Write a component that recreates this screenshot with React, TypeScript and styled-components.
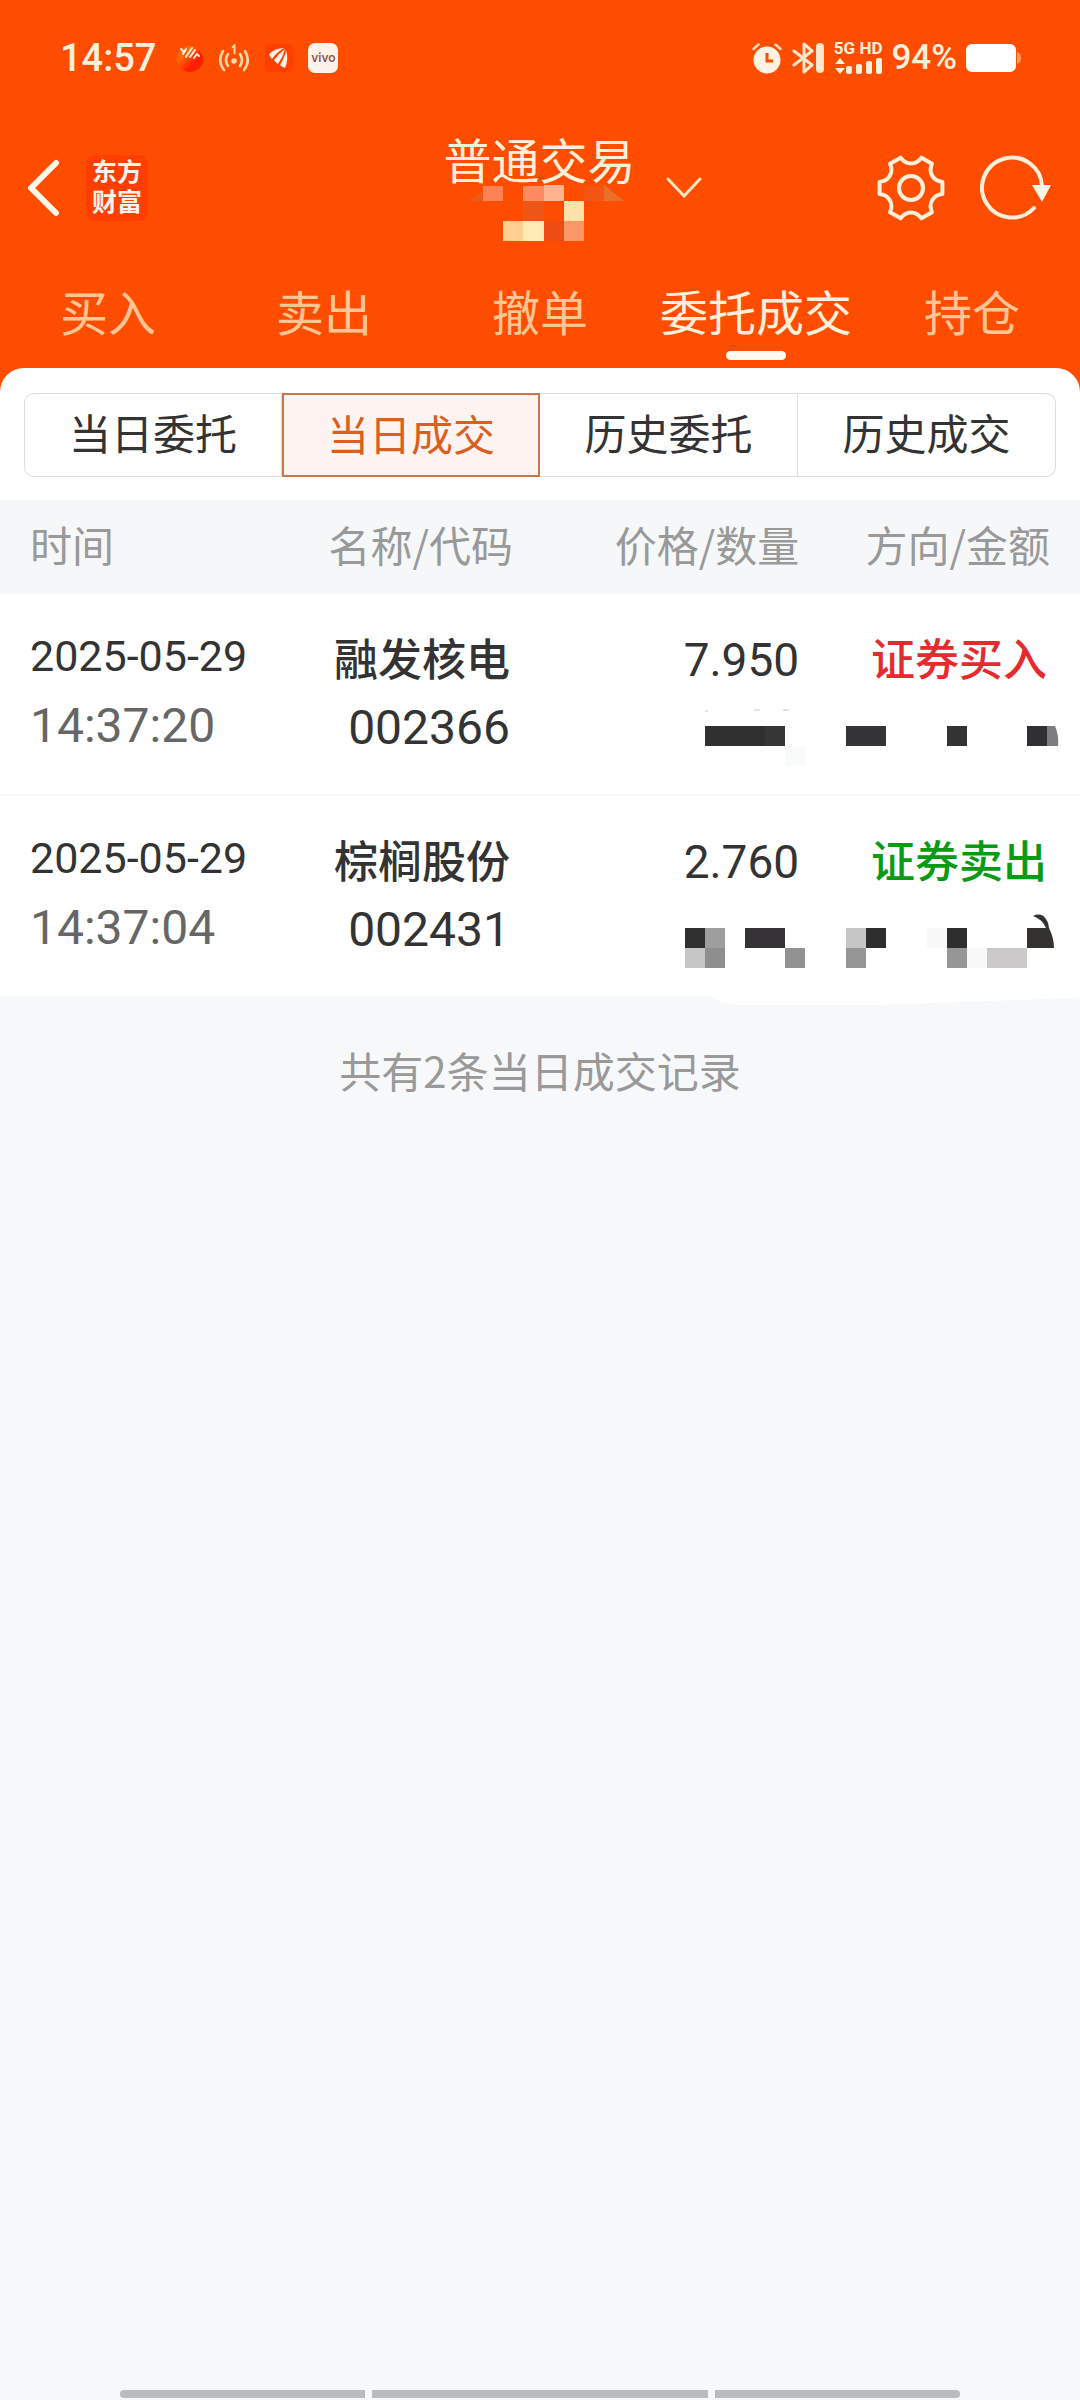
import React, { useState } from "react";
import styled, { createGlobalStyle } from "styled-components";

const CJK = '"Noto Sans CJK SC", sans-serif';
const DIGITS = 'Roboto, "Noto Sans CJK SC", sans-serif';
const CREAM = "#fff0dc";

const GlobalStyle = createGlobalStyle`
  *, *::before, *::after { box-sizing: border-box; }
  body { margin: 0; background: #f7f8fa; font-family: ${CJK}; }
  button { border: 0; padding: 0; margin: 0; background: none; color: inherit; font: inherit; cursor: pointer; }
  svg { display: block; flex: none; }
`;

const Page = styled.div`
  display: flex;
  flex-direction: column;
  min-height: 100vh;
  background: #f7f8fa;
`;

const Header = styled.header`
  background: #ff4d00;
  color: ${CREAM};
  padding-bottom: 24px;
  margin-bottom: -24px;
`;

const StatusBar = styled.div`
  display: flex;
  align-items: center;
  justify-content: space-between;
  height: 116px;
  padding: 0 59px 0 60px;
`;

const StatusGroup = styled.div<{ $gap: number }>`
  display: flex;
  align-items: center;
  gap: ${(p) => p.$gap}px;
`;

const Clock = styled.span`
  padding-right: 4px;
  font: 500 38px/48px ${DIGITS};
`;

const VivoBadge = styled.span`
  display: grid;
  place-items: center;
  width: 30px;
  height: 30px;
  border-radius: 7px;
  background: #fff2ea;
  color: #8a5a4a;
  font: 600 12px/12px Inter, sans-serif;
`;

const Network = styled.span`
  display: grid;
  gap: 3px;
  font: 700 17px/14px ${DIGITS};
  white-space: nowrap;
`;

const Percent = styled.span`
  font: 500 35px/40px ${DIGITS};
`;

const TitleBar = styled.div`
  display: grid;
  grid-template-columns: 1fr auto 1fr;
  align-items: center;
  height: 144px;
  padding: 0 28px 0 26px;
`;

const Tools = styled.div<{ $end?: boolean }>`
  display: flex;
  align-items: center;
  gap: ${(p) => (p.$end ? 34 : 26)}px;
  justify-content: ${(p) => (p.$end ? "flex-end" : "flex-start")};
`;

const BrandMark = styled.span`
  display: grid;
  place-content: center;
  width: 62px;
  height: 66px;
  border-radius: 8px;
  background: #ff3f00;
  color: #fff4ec;
  font: 700 25px/30px ${DIGITS};
  text-align: center;
`;

const AccountButton = styled.button`
  display: flex;
  align-items: center;
  gap: 30px;
  padding-left: 67px;
`;

const AccountName = styled.span`
  display: grid;
  justify-items: center;
  font-size: 48px;
  line-height: 46px;
`;

const Tabs = styled.nav`
  display: grid;
  grid-template-columns: repeat(5, 1fr);
  height: 108px;
`;

const Tab = styled.button<{ $active: boolean }>`
  position: relative;
  padding-bottom: 8px;
  font-size: 48px;
  line-height: 96px;
  white-space: nowrap;
  color: ${(p) => (p.$active ? CREAM : "#ffc594")};
  &::after {
    content: "";
    display: ${(p) => (p.$active ? "block" : "none")};
    position: absolute;
    left: 50%;
    bottom: 8px;
    width: 60px;
    height: 9px;
    margin-left: -30px;
    border-radius: 5px;
    background: #fffaf0;
  }
`;

const Panel = styled.main`
  border-radius: 24px 24px 0 0;
  background: #fff;
`;

const Segments = styled.div`
  display: grid;
  grid-template-columns: repeat(4, 1fr);
  padding: 25px 24px 23px;
`;

const Segment = styled.button<{ $active: boolean }>`
  height: 84px;
  border: 1px solid #dcdee0;
  border-left-width: 0;
  color: #333;
  font-size: 42px;
  line-height: 76px;
  padding-bottom: 6px;
  &:first-child { border-left-width: 1px; border-radius: 10px 0 0 10px; }
  &:last-child { border-radius: 0 10px 10px 0; }
  ${(p) =>
    p.$active &&
    `
    border: 2px solid #c8764a;
    background: #fff4f2;
    color: #d9601f;
  `}
`;

const Records = styled.table`
  width: 100%;
  table-layout: fixed;
  border-collapse: separate;
  border-spacing: 0;
`;

const Column = styled.col<{ $share: string }>`
  width: ${(p) => p.$share};
`;

const HeadCell = styled.th<{ $first?: boolean; $last?: boolean }>`
  height: 94px;
  padding: 0 ${(p) => (p.$last ? 30 : 0)}px 6px ${(p) => (p.$first ? 30 : 0)}px;
  background: #f5f7f8;
  color: #999;
  font-size: 42px;
  font-weight: 400;
  line-height: 60px;
  text-align: ${(p) => (p.$first ? "left" : "right")};
  white-space: nowrap;
`;

const Cell = styled.td<{ $first?: boolean; $last?: boolean }>`
  height: 202px;
  padding: 30px ${(p) => (p.$last ? 30 : 0)}px 0 ${(p) => (p.$first ? 30 : 0)}px;
  border-bottom: 2px solid #f7f7f7;
  color: #333;
  vertical-align: top;
  text-align: ${(p) => (p.$first ? "left" : "right")};
  white-space: nowrap;
`;

const DateLine = styled.div`
  font: 400 43px/64px ${DIGITS};
`;

const TimeLine = styled.div`
  color: #666;
  font: 400 48px/76px ${DIGITS};
`;

const NameLine = styled.div<{ $color?: string }>`
  padding-right: 3px;
  color: ${(p) => p.$color ?? "#333"};
  font: 500 44px/66px ${CJK};
`;

const CodeLine = styled.div`
  padding-right: 3px;
  font: 400 48px/76px ${DIGITS};
`;

const PriceLine = styled.div`
  font: 400 46px/72px ${DIGITS};
`;

const MaskLine = styled.div`
  display: flex;
  justify-content: flex-end;
  svg { overflow: visible; }
`;

const Summary = styled.p`
  margin: 42px 0 0;
  color: #999;
  font-size: 42px;
  line-height: 60px;
  text-align: center;
`;

const SystemNav = styled.div`
  display: grid;
  grid-template-columns: 8fr 11fr 8fr;
  gap: 7px;
  margin-top: auto;
  padding: 0 120px 2px;
`;

const NavBar = styled.span`
  height: 8px;
  background: #b9bbbd;
  &:first-child { border-radius: 4px 0 0 4px; }
  &:last-child { border-radius: 0 4px 4px 0; }
`;

const polar = (deg: number, r: number) => {
  const a = (deg * Math.PI) / 180;
  return `${(35 + r * Math.cos(a)).toFixed(1)} ${(35 + r * Math.sin(a)).toFixed(1)}`;
};

const gearPath =
  [0, 60, 120, 180, 240, 300]
    .map(
      (a, i) =>
        `${i === 0 ? "M" : "L"}${polar(a - 11, 32)} L${polar(a + 11, 32)} C${polar(a + 18, 23)} ${polar(a + 42, 23)} ${polar(a + 49, 32)}`
    )
    .join(" ") + " Z";

type Block = [x: number, y: number, w: number, h: number, fill: string];

const Blocks = ({ items }: { items: Block[] }) => (
  <>
    {items.map(([x, y, w, h, fill]) => (
      <rect key={`${x}-${y}`} x={x} y={y} width={w} height={h} fill={fill} />
    ))}
  </>
);

const accountMask: Block[] = [
  [40, 5, 20, 15, "#ff8257"],
  [80, 5, 21, 15, "#ff8c60"],
  [101, 4, 20, 16, "#ffb48e"],
  [141, 5, 20, 15, "#f45414"],
  [80, 20, 21, 20, "#ee5618"],
  [121, 20, 20, 20, "#ffe2aa"],
  [60, 40, 20, 20, "#ffd090"],
  [80, 40, 21, 20, "#ffebb6"],
  [101, 40, 20, 20, "#ef4c14"],
  [121, 40, 20, 20, "#fb9866"],
];

const quantityMasks: Block[][] = [
  [
    [26, 0, 60, 20, "#303030"],
    [86, 0, 20, 20, "#363636"],
    [106, 20, 20, 20, "#f8fbfa"],
  ],
  [
    [6, 0, 20, 20, "#303030"],
    [26, 0, 20, 20, "#9e9e9e"],
    [66, 0, 40, 20, "#353335"],
    [6, 20, 20, 20, "#c6c6c6"],
    [26, 20, 20, 20, "#8e8e8e"],
    [106, 20, 20, 20, "#929292"],
  ],
];

const amountMasks: Block[][] = [
  [
    [46, 0, 40, 20, "#353538"],
    [147, 0, 20, 20, "#333"],
    [227, 0, 20, 20, "#303032"],
  ],
  [
    [46, 0, 20, 20, "#c6c6c6"],
    [66, 0, 20, 20, "#2e2e2e"],
    [127, 0, 20, 20, "#f8f8f8"],
    [147, 0, 20, 20, "#2e2e2e"],
    [46, 20, 20, 20, "#969696"],
    [147, 20, 20, 20, "#969696"],
    [167, 20, 20, 20, "#f8f8f8"],
    [187, 20, 40, 20, "#cbc9ca"],
  ],
];

const records = [
  { date: "2025-05-29", time: "14:37:20", name: "融发核电", code: "002366", price: "7.950", side: "证券买入", color: "#e62a2e" },
  { date: "2025-05-29", time: "14:37:04", name: "棕榈股份", code: "002431", price: "2.760", side: "证券卖出", color: "#0a9a14" },
];

const tabs = ["买入", "卖出", "撤单", "委托成交", "持仓"];
const segments = ["当日委托", "当日成交", "历史委托", "历史成交"];

export default function App() {
  const [tab, setTab] = useState(3);
  const [segment, setSegment] = useState(1);

  return (
    <Page>
      <GlobalStyle />
      <Header>
        <StatusBar>
          <StatusGroup $gap={14}>
            <Clock>14:57</Clock>
            <svg width="30" height="30" viewBox="0 0 30 30">
              <defs>
                <linearGradient id="ball" x1="0" y1="0" x2="1" y2="1">
                  <stop offset="0.3" stopColor="#ff6a00" />
                  <stop offset="0.65" stopColor="#ff1e00" />
                </linearGradient>
              </defs>
              <circle cx="16" cy="16" r="13" fill="url(#ball)" />
              <path d="M7 6l2 2M9 11l3-5M12 14l6-9M16 14l5-7M20 15l3-4M24 12l1 1" stroke="#fff0e0" strokeWidth="2" strokeLinecap="round" />
            </svg>
            <svg width="32" height="30" viewBox="0 0 32 30" fill="none" stroke="#ffd9a8" strokeWidth="2.6" strokeLinecap="round">
              <path d="M5 8q-6 10 1 19M27 8q6 10-1 19M10 11q-4 6 0 12M22 11q4 6 0 12" />
              <path d="M14.500 4l2-1.500v8" strokeWidth="2" />
              <circle cx="16" cy="18" r="1.500" fill="#ffd9a8" />
            </svg>
            <svg width="30" height="30" viewBox="0 0 30 30">
              <rect x="1" y="1" width="28" height="28" rx="5" fill="#ff3f00" />
              <path d="M5 11Q11 5 20 5Q13 9 8 16Q6 14 5 11ZM10 17Q15 10 21 6Q19 14 14 21Q12 20 10 17ZM16 22Q21 14 22 7Q25 16 21 25Q18 24 16 22Z" fill="#fff0e4" />
            </svg>
            <VivoBadge>vivo</VivoBadge>
          </StatusGroup>
          <StatusGroup $gap={9}>
            <svg width="30" height="32" viewBox="0 0 30 32">
              <circle cx="15" cy="18" r="13.500" fill="#fff3e4" />
              <path d="M1.500 7l5-4.500M28.500 7l-5-4.500" stroke="#ffdcb4" strokeWidth="2.500" strokeLinecap="round" />
              <path d="M15 11v8h6" fill="none" stroke="#ff4d00" strokeWidth="3" />
            </svg>
            <svg width="34" height="32" viewBox="0 0 34 32" fill="none" stroke="#ffe6cc">
              <path d="M3 9l18 14-8 7V2l8 7L3 23" strokeWidth="3" strokeLinejoin="round" strokeLinecap="round" />
              <rect x="25" y="1" width="8" height="30" rx="4" fill="#ffe6cc" stroke="none" />
            </svg>
            <Network>
              5G HD
              <svg width="48" height="17" viewBox="0 0 48 17" fill="#fff0dc">
                <path d="M6 0l5 6H1zM6 16l5-6H1z" />
                <rect x="12" y="8" width="6" height="8" rx="2" />
                <rect x="22" y="6" width="6" height="10" rx="2" />
                <rect x="32" y="3" width="6" height="13" rx="2" />
                <rect x="42" y="0" width="6" height="16" rx="2" />
              </svg>
            </Network>
            <Percent>94%</Percent>
            <svg width="55" height="28" viewBox="0 0 55 28">
              <rect x="0" y="0" width="50" height="28" rx="6" fill="#fff" />
              <path d="M51 8q4 1 4 6t-4 6z" fill="#ff9a60" />
            </svg>
          </StatusGroup>
        </StatusBar>

        <TitleBar>
          <Tools>
            <button aria-label="返回">
              <svg width="34" height="60" viewBox="0 0 34 60" fill="none" stroke="#fff6ea" strokeWidth="6" strokeLinecap="round" strokeLinejoin="round">
                <path d="M30 5L5 30l25 25" />
              </svg>
            </button>
            <BrandMark>
              <span>东方</span>
              <span>财富</span>
            </BrandMark>
          </Tools>
          <AccountButton aria-haspopup="menu">
            <AccountName>
              普通交易
              <svg width="192" height="60" viewBox="0 0 192 60">
                <Blocks items={accountMask} />
                <path d="M24 20l16-9v9z" fill="#ea5a1c" />
                <path d="M161 4l20 16h-20z" fill="#e8702a" />
              </svg>
            </AccountName>
            <svg width="36" height="22" viewBox="0 0 36 22" fill="none" stroke="#ffe6c0" strokeWidth="3" strokeLinecap="round">
              <path d="M2 2l16 17L34 2" />
            </svg>
          </AccountButton>
          <Tools $end>
            <button aria-label="设置">
              <svg width="70" height="70" viewBox="0 0 70 70" fill="none" stroke={CREAM} strokeWidth="4" strokeLinejoin="round">
                <path d={gearPath} />
                <circle cx="35" cy="35" r="12" />
              </svg>
            </button>
            <button aria-label="刷新">
              <svg width="72" height="70" viewBox="0 0 72 70" fill="none" stroke={CREAM} strokeWidth="4" strokeLinecap="round">
                <path d="M54 55A30 30 0 1 1 62 33" />
                <path d="M52 32h19L62 49z" fill="#fff6ea" stroke="none" />
              </svg>
            </button>
          </Tools>
        </TitleBar>

        <Tabs>
          {tabs.map((label, i) => (
            <Tab key={label} $active={i === tab} onClick={() => setTab(i)}>
              {label}
            </Tab>
          ))}
        </Tabs>
      </Header>

      <Panel>
        <Segments>
          {segments.map((label, i) => (
            <Segment key={label} $active={i === segment} onClick={() => setSegment(i)}>
              {label}
            </Segment>
          ))}
        </Segments>
        <Records>
          <colgroup>
            <Column $share="26%" />
            <Column $share="21.5%" />
            <Column $share="26.5%" />
            <Column $share="26%" />
          </colgroup>
          <thead>
            <tr>
              <HeadCell $first>时间</HeadCell>
              <HeadCell>名称/代码</HeadCell>
              <HeadCell>价格/数量</HeadCell>
              <HeadCell $last>方向/金额</HeadCell>
            </tr>
          </thead>
          <tbody>
            {records.map((r, i) => (
              <tr key={r.code}>
                <Cell $first>
                  <DateLine>{r.date}</DateLine>
                  <TimeLine>{r.time}</TimeLine>
                </Cell>
                <Cell>
                  <NameLine>{r.name}</NameLine>
                  <CodeLine>{r.code}</CodeLine>
                </Cell>
                <Cell>
                  <PriceLine>{r.price}</PriceLine>
                  <MaskLine>
                    <svg width="120" height="60" viewBox="0 -30 120 60">
                      <Blocks items={quantityMasks[i]} />
                      {i === 0 && <path d="M26 -15h3M75 -16h6M104 -16h6" stroke="#c8c8c8" strokeWidth="1" />}
                      {i === 1 && <path d="M30 66Q36 75 60 77L200 77Q300 73 400 70V66z" fill="#fff" />}
                    </svg>
                  </MaskLine>
                </Cell>
                <Cell $last>
                  <NameLine $color={r.color}>{r.side}</NameLine>
                  <MaskLine>
                    <svg width="250" height="60" viewBox="0 -36 250 60">
                      <Blocks items={amountMasks[i]} />
                      {i === 0 ? (
                        <path d="M247 0h8q4 9 3 20h-11z" fill="#7d7d7f" />
                      ) : (
                        <path d="M227 0h19Q242-9 233-12q8-4 13 3 3 4 3 9 5 10 5 20h-27z" fill="#33322f" />
                      )}
                    </svg>
                  </MaskLine>
                </Cell>
              </tr>
            ))}
          </tbody>
        </Records>
      </Panel>
      <Summary>共有2条当日成交记录</Summary>

      <SystemNav>
        <NavBar />
        <NavBar />
        <NavBar />
      </SystemNav>
    </Page>
  );
}
